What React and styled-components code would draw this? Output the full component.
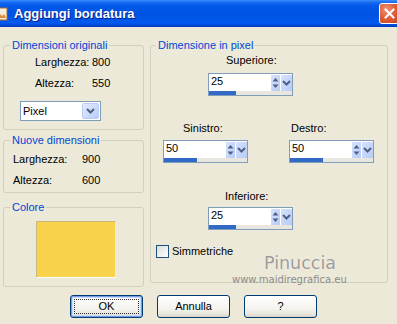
import React from 'react';
import styled, { createGlobalStyle } from 'styled-components';

const Global = createGlobalStyle`
  html, body { margin: 0; padding: 0; background: #ECE9D8; }
  body { font-family: "Liberation Sans", Arial, sans-serif; font-size: 11px; color: #000; }
  * { box-sizing: border-box; }
`;

const Window = styled.div`
  width: 397px;
  height: 324px;
  background: #ECE9D8;
  overflow: hidden;
  position: relative;
  display: flex;
  flex-direction: column;
`;

const TitleBar = styled.div`
  height: 27px;
  flex: none;
  display: flex;
  align-items: center;
  background: linear-gradient(to bottom,
    #3D8DF7 0px, #1C70F4 2px, #0A5FEC 4px, #0056E6 8px,
    #0054E3 15px, #0057E8 20px, #005AEE 23px, #004BD9 25px, #0038B8 27px);
`;

const TitleIcon = styled.svg`
  width: 16px;
  height: 16px;
  margin-left: -8px;
  flex: none;
`;

const TitleText = styled.div`
  margin-left: 6px;
  font-family: "Liberation Sans", Arial, sans-serif;
  font-weight: bold;
  font-size: 13px;
  line-height: 15px;
  color: #fff;
  text-shadow: 1px 1px 0 #0A1E8A;
  flex: 1;
`;

const CloseButton = styled.div`
  width: 21px;
  height: 21px;
  margin-right: -3px;
  border: 1px solid #fff;
  border-radius: 3px;
  background: radial-gradient(circle at 35% 30%, #F09577 0%, #E0603A 45%, #C4401A 100%);
  display: flex;
  align-items: center;
  justify-content: center;
  flex: none;
`;

const Body = styled.div`
  padding: 12px 9px 0 3px;
  display: flex;
  flex-direction: column;
`;

const Columns = styled.div`
  display: flex;
  gap: 6px;
  align-items: flex-start;
`;

const LeftCol = styled.div`
  width: 141px;
  display: flex;
  flex-direction: column;
`;

const Group = styled.div`
  display: flex;
  flex-direction: column;
  margin-top: ${p => p.$mt || 0}px;
  width: ${p => p.$w ? `${p.$w}px` : 'auto'};
`;

const Legend = styled.div`
  align-self: flex-start;
  margin-left: ${p => p.$ml ?? 7}px;
  margin-bottom: -7px;
  padding: 0 2px;
  background: #ECE9D8;
  color: #0046D5;
  line-height: 13px;
  position: relative;
  z-index: 1;
`;

const Frame = styled.div`
  border: 1px solid #D0D0BF;
  border-radius: 3px;
  padding: ${p => p.$pad};
  display: flex;
  flex-direction: column;
  align-items: flex-start;
`;

const InfoRow = styled.div`
  display: grid;
  grid-template-columns: ${p => p.$label}px auto;
  line-height: 13px;
  margin-left: ${p => p.$indent || 0}px;
  margin-top: ${p => p.$mt || 0}px;
`;

const Combo = styled.div`
  width: 81px;
  height: 20px;
  margin-top: 11px;
  border: 1px solid #7F9DB9;
  background: #fff;
  display: flex;
  align-items: stretch;
`;

const ComboText = styled.div`
  flex: 1;
  padding-left: 2px;
  line-height: 18px;
`;

const ComboButton = styled.div`
  width: 17px;
  margin: 1px;
  border-radius: 2px;
  border: 1px solid #BACCF3;
  background: linear-gradient(to bottom right, #E4ECFD, #B9CDF8);
  display: flex;
  align-items: center;
  justify-content: center;
`;

const Swatch = styled.div`
  width: 80px;
  height: 57px;
  margin-left: 32px;
  background: #F9D24C;
  border-top: 1px solid #C8B87C;
  border-left: 1px solid #C8B87C;
  border-right: 1px solid #F4EBCB;
  border-bottom: 1px solid #FFFFFF;
`;

const FieldCol = styled.div`
  display: flex;
  flex-direction: column;
  margin-left: ${p => p.$ml || 0}px;
  margin-top: ${p => p.$mt || 0}px;
`;

const FieldLabel = styled.div`
  line-height: 13px;
  padding-left: ${p => p.$indent || 0}px;
  margin-bottom: ${p => p.$gap}px;
`;

const PairRow = styled.div`
  display: flex;
  gap: 41px;
  margin-left: 12px;
  margin-top: ${p => p.$mt}px;
`;

const Spin = styled.div`
  width: 85px;
  height: 23px;
  border: 1px solid #7F9DB9;
  background: #fff;
  display: flex;
  flex-direction: column;
`;

const SpinTop = styled.div`
  height: 17px;
  display: flex;
`;

const SpinValue = styled.div`
  flex: 1;
  padding: 1px 0 0 2px;
  line-height: 13px;
`;

const SpinBtn = styled.div`
  width: ${p => p.$w}px;
  height: 16px;
  margin-top: 1px;
  background: linear-gradient(to bottom right, #D7E2FC, #B7CBF7);
  border-left: 1px solid #fff;
  display: flex;
  align-items: center;
  justify-content: center;
`;

const Track = styled.div`
  height: 4px;
  background: #E8E6DE;
  display: flex;
`;

const Fill = styled.div`
  height: 4px;
  background: #316AC5;
`;

const CheckRow = styled.div`
  display: flex;
  align-items: center;
  gap: 3px;
  margin: 15px 0 0 5px;
  line-height: 13px;
`;

const CheckBox = styled.div`
  width: 13px;
  height: 13px;
  border: 1px solid #1C5180;
  background: linear-gradient(to bottom right, #DCDCD7, #FFFFFF);
`;

const ButtonRow = styled.div`
  display: flex;
  gap: 14px;
  margin: 8px 0 0 67px;
`;

const Button = styled.div`
  position: relative;
  width: 73px;
  height: 23px;
  border: 1px solid #003C74;
  border-radius: 3px;
  background: linear-gradient(to bottom, #FFFFFF 0%, #F4F3EE 60%, #E6E3D8 90%, #D6D0C5 100%);
  display: flex;
  align-items: center;
  justify-content: center;
  line-height: 13px;
  box-shadow: ${p => p.$default ? 'inset 0 0 0 1px #7A9BE6, inset 0 0 0 2px #C6DAF8' : 'none'};
  &::after {
    content: '';
    display: ${p => p.$default ? 'block' : 'none'};
    position: absolute;
    inset: 3px;
    border: 1px dotted #333;
  }
`;

const Watermark = styled.div`
  position: absolute;
  left: 232px;
  top: 253px;
  display: flex;
  flex-direction: column;
  align-items: flex-start;
  pointer-events: none;
`;

const WmName = styled.div`
  margin-left: 32px;
  font-family: "DejaVu Sans", Verdana, sans-serif;
  font-size: 17.5px;
  line-height: 20px;
  color: #9C9C9C;
  text-shadow: 0 0 1px #fff;
`;

const WmUrl = styled.div`
  margin-top: 1px;
  font-family: "DejaVu Sans", Verdana, sans-serif;
  font-size: 10px;
  line-height: 12px;
  color: #8C8C8C;
`;

const Chevron = () => (
  <svg width="9" height="6" viewBox="0 0 9 6">
    <path d="M1 1 L4.5 4.5 L8 1" stroke="#4D6185" strokeWidth="2" fill="none" />
  </svg>
);

const UpDown = () => (
  <svg width="7" height="12" viewBox="0 0 7 12">
    <path d="M3.5 1 L6.5 4.5 L0.5 4.5 Z" fill="#4D6185" />
    <path d="M0.5 7.5 L6.5 7.5 L3.5 11 Z" fill="#4D6185" />
  </svg>
);

const SpinBox = ({ value, fill }) => (
  <Spin>
    <SpinTop>
      <SpinValue>{value}</SpinValue>
      <SpinBtn $w={10}><UpDown /></SpinBtn>
      <SpinBtn $w={12}><Chevron /></SpinBtn>
    </SpinTop>
    <Track>
      <Fill style={{ width: fill }} />
    </Track>
  </Spin>
);

export default function App() {
  return (
    <Window>
      <Global />
      <TitleBar>
        <TitleIcon viewBox="0 0 16 16">
          <rect x="1" y="2" width="14" height="12" fill="#F4EEDD" stroke="#B06A2A" />
          <path d="M3 12 L7 7 L10 10 L12 8 L14 12 Z" fill="#E08A3A" />
        </TitleIcon>
        <TitleText>Aggiungi bordatura</TitleText>
        <CloseButton>
          <svg width="11" height="11" viewBox="0 0 11 11">
            <path d="M1.5 1.5 L9.5 9.5 M9.5 1.5 L1.5 9.5" stroke="#fff" strokeWidth="2" strokeLinecap="square" />
          </svg>
        </CloseButton>
      </TitleBar>
      <Body>
        <Columns>
          <LeftCol>
            <Group>
              <Legend>Dimensioni originali</Legend>
              <Frame $pad="10px 0 8px 16px">
                <InfoRow $label={57} $indent={15}>
                  <span>Larghezza:</span><span>800</span>
                </InfoRow>
                <InfoRow $label={57} $indent={15} $mt={8}>
                  <span>Altezza:</span><span>550</span>
                </InfoRow>
                <Combo>
                  <ComboText>Pixel</ComboText>
                  <ComboButton><Chevron /></ComboButton>
                </Combo>
              </Frame>
            </Group>
            <Group $mt={4}>
              <Legend>Nuove dimensioni</Legend>
              <Frame $pad="12px 0 5px 9px">
                <InfoRow $label={69}>
                  <span>Larghezza:</span><span>900</span>
                </InfoRow>
                <InfoRow $label={69} $mt={8}>
                  <span>Altezza:</span><span>600</span>
                </InfoRow>
              </Frame>
            </Group>
            <Group $mt={8}>
              <Legend>Colore</Legend>
              <Frame $pad="13px 0 8px 0">
                <Swatch />
              </Frame>
            </Group>
          </LeftCol>
          <Group $w={238}>
            <Legend $ml={6}>Dimensione in pixel</Legend>
            <Frame $pad="8px 0 24px 0">
              <FieldCol $ml={57}>
                <FieldLabel $indent={18} $gap={6}>Superiore:</FieldLabel>
                <SpinBox value="25" fill={27} />
              </FieldCol>
              <PairRow $mt={26}>
                <FieldCol>
                  <FieldLabel $indent={20} $gap={5}>Sinistro:</FieldLabel>
                  <SpinBox value="50" fill={33} />
                </FieldCol>
                <FieldCol>
                  <FieldLabel $indent={2} $gap={5}>Destro:</FieldLabel>
                  <SpinBox value="50" fill={33} />
                </FieldCol>
              </PairRow>
              <FieldCol $ml={57} $mt={27}>
                <FieldLabel $indent={17} $gap={4}>Inferiore:</FieldLabel>
                <SpinBox value="25" fill={27} />
              </FieldCol>
              <CheckRow>
                <CheckBox />
                <span>Simmetriche</span>
              </CheckRow>
            </Frame>
          </Group>
        </Columns>
        <ButtonRow>
          <Button $default>OK</Button>
          <Button>Annulla</Button>
          <Button>?</Button>
        </ButtonRow>
      </Body>
      <Watermark>
        <WmName>Pinuccia</WmName>
        <WmUrl>www.maidiregrafica.eu</WmUrl>
      </Watermark>
    </Window>
  );
}
